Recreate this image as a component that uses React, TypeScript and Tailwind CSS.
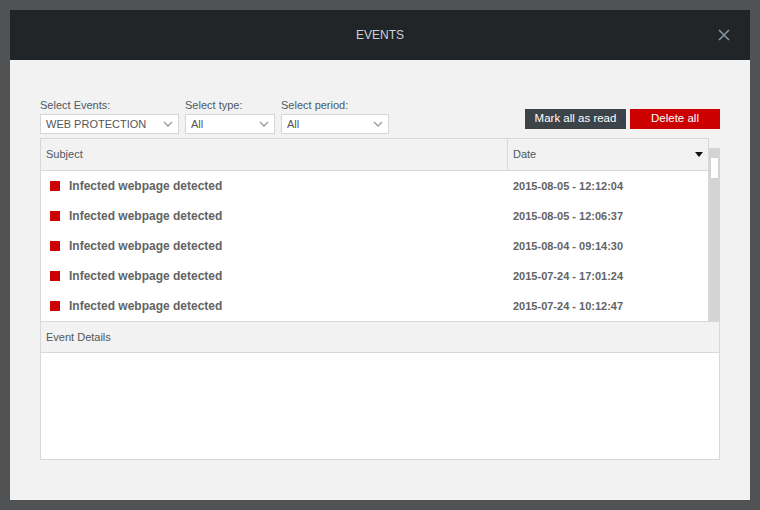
const events = [
  { subject: "Infected webpage detected", date: "2015-08-05 - 12:12:04" },
  { subject: "Infected webpage detected", date: "2015-08-05 - 12:06:37" },
  { subject: "Infected webpage detected", date: "2015-08-04 - 09:14:30" },
  { subject: "Infected webpage detected", date: "2015-07-24 - 17:01:24" },
  { subject: "Infected webpage detected", date: "2015-07-24 - 10:12:47" },
];

function Chevron() {
  return (
    <svg width="10" height="6" viewBox="0 0 10 6" className="shrink-0">
      <path d="M1 1 L5 5 L9 1" fill="none" stroke="#9a9a9a" strokeWidth="1.3" />
    </svg>
  );
}

function FilterSelect({ label, value, width }: { label: string; value: string; width: string }) {
  return (
    <div className="flex flex-col">
      <span className="text-[11px] leading-[13px] text-[#4e5862]">{label}</span>
      <div
        className={`mt-[2px] flex h-[20px] items-center justify-between border border-[#d6d6d6] bg-white pl-[5px] pr-[5px] ${width}`}
      >
        <span className="text-[11px] text-[#555]">{value}</span>
        <Chevron />
      </div>
    </div>
  );
}

export default function App() {
  return (
    <div
      className="h-[510px] w-[760px] bg-[#505254] p-[10px]"
      style={{ fontFamily: '"Liberation Sans", Arial, sans-serif' }}
    >
      <div className="flex h-[490px] w-[740px] flex-col">
        {/* title bar */}
        <div className="relative flex h-[50px] items-center justify-center bg-[#212528]">
          <span className="text-[12px] text-[#c9d1d9]">EVENTS</span>
          <svg
            width="12"
            height="12"
            viewBox="0 0 12 12"
            className="absolute right-[20px] top-[19px]"
          >
            <path d="M1 1 L11 11 M11 1 L1 11" stroke="#8b98a3" strokeWidth="1.5" />
          </svg>
        </div>

        {/* body */}
        <div className="flex flex-1 flex-col bg-[#f2f2f2] px-[30px] pt-[39px]">
          <div className="flex items-end justify-between">
            <div className="flex gap-[6px]">
              <FilterSelect label="Select Events:" value="WEB PROTECTION" width="w-[139px]" />
              <FilterSelect label="Select type:" value="All" width="w-[90px]" />
              <FilterSelect label="Select period:" value="All" width="w-[108px]" />
            </div>
            <div className="mb-[5px] flex gap-[4px]">
              <button className="h-[20px] w-[101px] bg-[#3d4449] text-[11.5px] text-white">
                Mark all as read
              </button>
              <button className="h-[20px] w-[90px] bg-[#cc0000] text-[11.5px] text-white">
                Delete all
              </button>
            </div>
          </div>

          {/* events table */}
          <div className="mt-[4px] flex w-[680px]">
            <div className="flex w-[669px] flex-col border-l border-t border-r border-[#d8d8d8]">
              <div className="flex h-[31px] items-center bg-[#f2f2f2] text-[11px] text-[#4e5862]">
                <div className="flex h-full w-[467px] items-center border-r border-[#d8d8d8] pl-[5px]">
                  Subject
                </div>
                <div className="flex flex-1 items-center justify-between pl-[5px] pr-[5px]">
                  <span>Date</span>
                  <svg width="8" height="5" viewBox="0 0 8 5">
                    <path d="M0 0 L8 0 L4 5 Z" fill="#111" />
                  </svg>
                </div>
              </div>
              <div className="border-t border-[#d8d8d8] bg-white">
                {events.map((e, i) => (
                  <div key={i} className="flex h-[30px] items-center font-bold text-[#636363]">
                    <div className="flex w-[467px] items-center pl-[9px] text-[12px]">
                      <span className="mr-[9px] h-[10px] w-[10px] bg-[#cc0000]" />
                      {e.subject}
                    </div>
                    <div className="pl-[5px] text-[11px]">{e.date}</div>
                  </div>
                ))}
              </div>
            </div>
            <div className="mt-[10px] w-[11px] bg-[#d4d4d4] pl-[2px] pr-[2px] pt-[10px]">
              <div className="h-[20px] w-full bg-white" />
            </div>
          </div>

          {/* event details */}
          <div className="flex h-[139px] w-[680px] flex-col border border-[#d8d8d8]">
            <div className="flex h-[30px] items-center bg-[#f2f2f2] pl-[5px] text-[11px] text-[#555]">
              Event Details
            </div>
            <div className="flex-1 border-t border-[#d8d8d8] bg-white" />
          </div>
        </div>
      </div>
    </div>
  );
}
